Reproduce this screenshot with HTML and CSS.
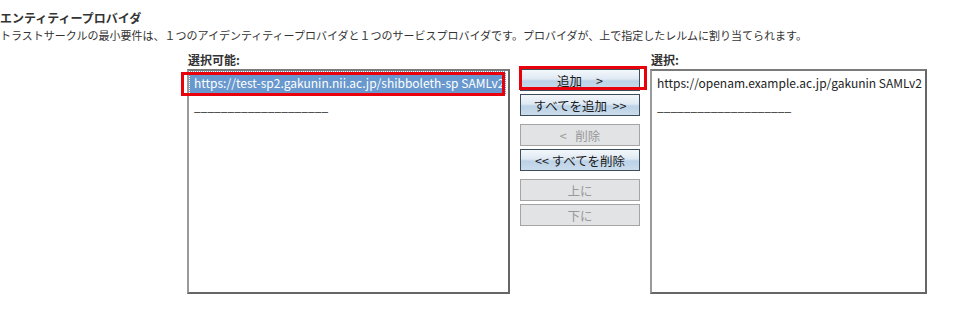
FILE: index.html
```html
<!DOCTYPE html>
<html lang="ja">
<head>
<meta charset="utf-8">
<title>エンティティープロバイダ</title>
<link rel="stylesheet" href="styles.css">
</head>
<body>
<div class="title">エンティティープロバイダ</div>
<div class="desc">トラストサークルの最小要件は、１つのアイデンティティープロバイダと１つのサービスプロバイダです。プロバイダが、上で指定したレルムに割り当てられます。</div>
<div class="chooser">
  <div class="col">
    <div class="label">選択可能:</div>
    <div class="listbox left">
      <div class="opt selected">https://test-sp2.gakunin.nii.ac.jp/shibboleth-sp SAMLv2</div>
      <div class="opt">____________________</div>
    </div>
  </div>
  <div class="buttons">
    <div class="group">
      <button class="btn">追加&nbsp;&nbsp;&nbsp;&nbsp;&nbsp;&gt;</button>
      <button class="btn">すべてを追加&nbsp;&nbsp;&gt;&gt;</button>
    </div>
    <div class="group">
      <button class="btn" disabled>&lt;&nbsp;&nbsp;&nbsp;削除</button>
      <button class="btn">&lt;&lt; すべてを削除</button>
    </div>
    <div class="group">
      <button class="btn" disabled>上に</button>
      <button class="btn" disabled>下に</button>
    </div>
  </div>
  <div class="col">
    <div class="label">選択:</div>
    <div class="listbox right">
      <div class="opt">https://openam.example.ac.jp/gakunin SAMLv2</div>
      <div class="opt">____________________</div>
    </div>
  </div>
</div>
<div class="mark mark-item"></div>
<div class="mark mark-btn"></div>
</body>
</html>
```
FILE: styles.css
```css
body {
  margin: 0;
  font-family: "Noto Sans CJK JP", "Noto Sans", sans-serif;
  color: #333;
  background: #fff;
}
.title {
  font-size: 12px;
  font-weight: bold;
  line-height: 16px;
  padding-top: 10px;
}
.desc {
  font-size: 11px;
  line-height: 16px;
  padding-top: 1px;
}
.chooser {
  display: flex;
  padding-left: 187px;
  margin-top: 9px;
}
.label {
  font-size: 12px;
  font-weight: bold;
  line-height: 16px;
  margin-bottom: 1px;
  padding-left: 1px;
}
.listbox {
  box-sizing: border-box;
  height: 225px;
  border: 2px solid;
  border-color: #7a7a7a #666 #666 #9a9a9a;
  padding-top: 1px;
  font-size: 12px;
  line-height: 18px;
  color: #222;
  overflow: hidden;
}
.listbox.left { width: 323px; }
.listbox.right { width: 277px; }
.opt {
  padding: 2px 1px 2px 4px;
  white-space: nowrap;
  width: max-content;
  border: 1px solid transparent;
  margin-top: -1px;
}
.selected {
  background: #6898cd;
  color: #fff;
  border: 1px dotted #fff;
}
.buttons {
  width: 120px;
  margin: 0 10px;
  padding-top: 17px;
  display: flex;
  flex-direction: column;
  gap: 8px;
}
.group {
  display: flex;
  flex-direction: column;
  gap: 3px;
}
.btn {
  box-sizing: border-box;
  width: 120px;
  height: 22px;
  margin: 0;
  padding: 0;
  font-family: inherit;
  font-size: 12.5px;
  color: #1a1a1a;
  border: 1px solid #3d4d5c;
  background: linear-gradient(#f3f7fb 0%, #dfe9f3 45%, #bcd2e7 55%, #cbdcec 100%);
  white-space: nowrap;
}
.btn:disabled {
  color: #999;
  border-color: #a5a5a5;
  background: #e1e3e4;
}
.mark {
  position: absolute;
  box-sizing: border-box;
  border: 3px solid #e8000b;
  pointer-events: none;
}
.mark-item {
  left: 181px;
  top: 72px;
  width: 324px;
  height: 24px;
}
.mark-btn {
  left: 519px;
  top: 66px;
  width: 128px;
  height: 24px;
}
```
